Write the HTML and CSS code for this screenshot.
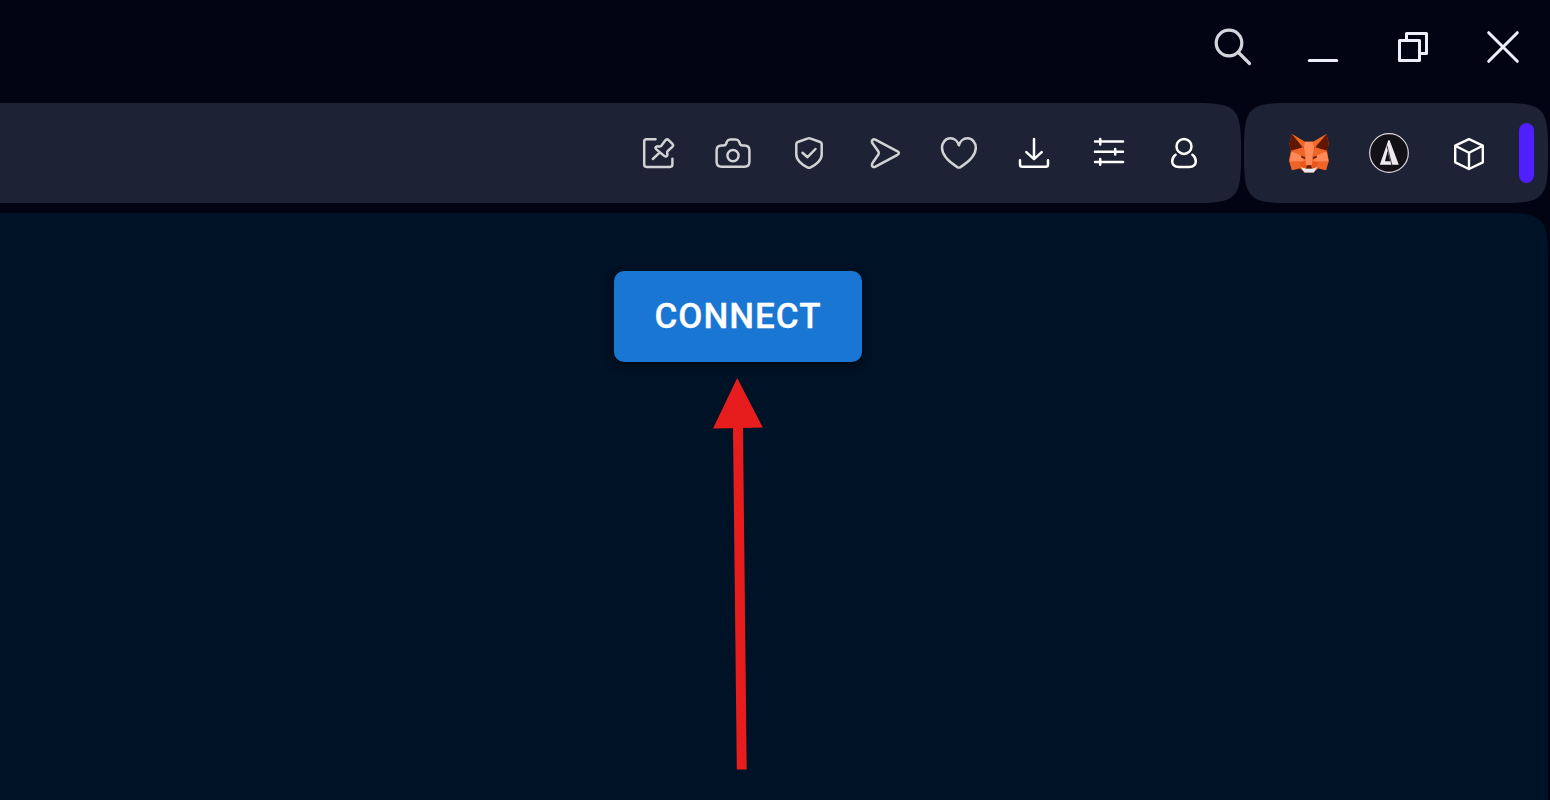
FILE: index.html
```html
<!DOCTYPE html>
<html lang="en">
<head>
<meta charset="utf-8">
<title>Connect</title>
<link rel="stylesheet" href="styles.css">
</head>
<body>
<header class="titlebar">
  <svg class="icon search" viewBox="1213 27 40 40"><circle cx="1229" cy="43" r="12.8"/><path d="M1238.5 52.5L1249.5 63.5"/></svg>
  <svg class="icon window" viewBox="1303 27 40 40"><path d="M1309.3 60.5H1336.7"/></svg>
  <svg class="icon window" viewBox="1393 27 40 40"><path d="M1399.5 40.5H1419.5V60.5H1399.5ZM1406.5 40V33.5H1426.5V53.5H1420"/></svg>
  <svg class="icon window" viewBox="1483 27 40 40"><path d="M1488.7 32.7L1517.3 61.3M1517.3 32.7L1488.7 61.3"/></svg>
</header>
<nav class="toolbar">
  <div class="panel address">
    <svg class="icon soft" viewBox="638 133 40 40"><path d="M655.5 139.3H646.5Q644.2 139.3 644.2 141.6V164.6Q644.2 166.9 646.5 166.9H670.1Q672.4 166.9 672.4 164.6V158.8M652.8 159L659.3 152.9M665.6 140.1Q667.2 138.7 668.7 140.2L672.4 143.9Q673.8 145.4 672.3 146.9L668 150.7Q667 151.6 667.2 153L667.4 154.2Q667.5 156.6 665.4 156.4Q664.4 156.2 663.6 155.4L656.4 149.4Q654.4 147.6 656.5 146.6Q657.2 146.2 658.5 146.4L660 146.5Q661 146.5 661.5 145.5Z"/></svg>
    <svg class="icon soft" viewBox="713 133 40 40"><path d="M727 141.5Q728 139.4 730.2 139.4H735.8Q738 139.4 739 141.5L740 144Q740.6 145.6 742.4 145.6H744.5Q749.4 145.6 749.4 150.5V161.8Q749.4 166.8 744.4 166.8H721.6Q716.6 166.8 716.6 161.8V150.5Q716.6 145.6 721.5 145.6H723.6Q725.4 145.6 726 144Z"/><circle cx="733" cy="155.6" r="5.6"/></svg>
    <svg class="icon soft" viewBox="788 133 40 40"><path d="M808 138.4Q809 138 810 138.4L820.2 142Q821.7 142.5 821.7 144V154.5C821.7 160 816 165 810.2 167.6Q809 168.1 807.8 167.6C802 165 796.3 160 796.3 154.5V144Q796.3 142.5 797.8 142ZM802.5 152.8L807.5 157.2L815.5 149"/></svg>
    <svg class="icon soft" viewBox="863 133 40 40"><path d="M875.3 139.7L897.5 151.3Q900.3 153 897.5 154.8L875.5 166.7Q872.8 167.9 872 165.5Q871.7 164.5 872.5 163L878.4 154.5Q879.3 153 878.4 151.5L872.5 143.3Q871.2 141.2 872.8 139.8Q873.9 138.9 875.3 139.7Z"/></svg>
    <svg class="icon soft" viewBox="938 133 40 40"><path d="M958.9 145.3C957.8 141.4 954.6 138.3 950.5 138.3C945.5 138.3 942 142.5 942 147.8C942 157.5 953 164.4 957.3 167.1Q958.9 168 960.5 167.1C964.8 164.4 975.8 157.5 975.8 147.8C975.8 142.5 972.3 138.3 967.3 138.3C963.2 138.3 960 141.4 958.9 145.3Z"/></svg>
    <svg class="icon" viewBox="1013 133 40 40"><path d="M1034 139V159M1026.3 152.2L1034 159.2L1041.7 152.2M1020 160.3V164.5Q1020 166.8 1022.3 166.8H1045.7Q1048 166.8 1048 164.5V160.3"/></svg>
    <svg class="icon" viewBox="1088 133 40 40"><path d="M1095 141.5H1123M1095 151.7H1123M1095 161.9H1123M1100.2 139V144.5M1115.2 149V154.5M1100.2 159V164.8"/></svg>
    <svg class="icon" viewBox="1163 133 40 40"><circle cx="1184" cy="146.4" r="7.5"/><path d="M1175.6 154.7Q1172.2 157.2 1172.2 161.3Q1172.2 167 1179 167H1189Q1195.8 167 1195.8 161.3Q1195.8 157.2 1192.4 154.7"/></svg>
  </div>
  <div class="panel extensions">
    <svg class="icon logo" viewBox="1289 133 40 40">
      <path fill="#e8571c" d="M1292 134L1304 141.7H1314L1326.5 134L1329 144L1327 150L1328.7 160L1326 170.3L1318 168.5L1313.5 172.5H1304.5L1300 168.5L1292 170.3L1289 160L1291 150L1289.2 144Z"/>
      <path fill="#5f1704" d="M1292 134L1304 147.5L1291 150.5L1289.2 144ZM1326.5 134L1314 147.5L1327.5 150.5L1328.9 144Z"/>
      <path fill="#f26722" d="M1292 134L1305 141.7L1306.5 148.5L1302.5 147ZM1326.5 134L1313 141.7L1311.5 148.5L1315.5 147Z"/>
      <path fill="#ff8a57" d="M1305 141.7H1313L1314 147.5L1312 165H1306L1304 147.5ZM1291.5 152L1299 153L1305 161L1299 161.8H1289.3ZM1326.5 152L1319 153L1313 161L1319 161.8H1328.7Z"/>
      <path fill="#ef6428" d="M1303 147L1306 157L1299 154.5L1292 151ZM1315 147L1312 157L1319 154.5L1326 151ZM1289.3 161.5H1299L1301.5 167L1292 170ZM1328.7 161.5H1319L1316.5 167L1326 170Z"/>
      <path fill="#671d0b" d="M1301 156L1305 157L1305.5 158.8L1301.5 158ZM1313 157L1317 156L1316.5 158L1312.5 158.8ZM1307 165.3H1311L1312 168.8H1306Z"/>
      <path fill="#e8eaf0" d="M1300.7 167L1306 168.8H1312.3L1317.5 167L1313.7 172.5H1304.5Z"/>
    </svg>
    <svg class="icon logo" viewBox="1369 133 40 40">
      <circle cx="1389" cy="153" r="19.3" fill="#111116" stroke="#dcd5df" stroke-width="1.2"/>
      <path fill="#eee9f0" d="M1388.2 140.2H1389.6L1398.8 164.7H1379.8L1387.2 143.5Z"/>
      <path fill="#111116" d="M1387.6 151L1390.3 161.3H1385Z"/>
      <path fill="none" stroke="#111116" stroke-width=".8" d="M1387 146L1391.8 164.7"/>
    </svg>
    <svg class="icon cube" viewBox="1449 133 40 40"><path d="M1469 139.2L1482.8 145.7V162.3L1469 169L1455.2 162.3V145.7ZM1455.2 145.7L1469 152.7L1482.8 145.7M1469 152.7V169"/></svg>
    <span class="handle"></span>
  </div>
</nav>
<main class="content">
  <button class="connect">CONNECT</button>
  <svg class="arrow" viewBox="713 378 50 392"><path d="M737.2 378L762.8 427.6L743 428L746.7 769.5H736.8L733 428.2L713 428.6Z"/></svg>
</main>
</body>
</html>
```
FILE: styles.css
```css
* { box-sizing: border-box; }
body {
  margin: 0;
  width: 1550px;
  height: 800px;
  overflow: hidden;
  background: #020413;
  font-family: Roboto, sans-serif;
}
.icon {
  flex: none;
  width: 40px;
  height: 40px;
  fill: none;
  stroke: #fff;
  stroke-width: 2.5;
  stroke-linecap: round;
  stroke-linejoin: round;
}
.soft { stroke: #d1d2d3; }
.search { stroke: #d3d6dd; stroke-width: 3.2; }
.window { stroke: #edf0fa; stroke-width: 3; stroke-linejoin: round; }
.cube { stroke-width: 2.4; }
.logo { stroke: none; }
.titlebar {
  display: flex;
  justify-content: flex-end;
  gap: 50px;
  height: 103px;
  padding: 27px 27px 0 0;
}
.toolbar {
  display: flex;
  gap: 3px;
  height: 100px;
}
.panel {
  display: flex;
  align-items: center;
  height: 100px;
  background: #1e2235;
}
.address {
  width: 1241px;
  justify-content: flex-end;
  gap: 35px;
  padding-right: 38px;
  clip-path: path("M0 0H1204C1235 1 1240 7 1241 38V62C1240 93 1235 99 1204 100H0Z");
}
.extensions {
  width: 304px;
  gap: 40px;
  padding-left: 45px;
  clip-path: path("M37 0H267C298 1 303 7 304 38V62C303 93 298 99 267 100H37C6 99 1 93 0 62V38C1 7 6 1 37 0Z");
}
.handle {
  width: 15px;
  height: 60px;
  margin-left: -10px;
  border-radius: 8px;
  background: #4f1fff;
}
.content {
  display: flex;
  flex-direction: column;
  align-items: center;
  width: 1548px;
  height: 587px;
  margin-top: 10px;
  padding: 58px 72px 0 0;
  background: #001226;
  clip-path: path("M0 0H1511C1542 1 1547 7 1548 38V587H0Z");
}
.connect {
  width: 248px;
  height: 91px;
  padding: 0;
  border: 0;
  border-radius: 10px;
  background: #1976d2;
  color: #fff;
  font: 500 35px/61px Roboto, sans-serif;
  letter-spacing: 1px;
  -webkit-text-stroke: .3px #fff;
  box-shadow: 0 3px 5px rgba(0, 0, 0, .3), 0 3px 12px rgba(0, 0, 0, .2);
}
.arrow {
  flex: none;
  width: 50px;
  height: 392px;
  margin-top: 16px;
  fill: #e71d1d;
}
```
